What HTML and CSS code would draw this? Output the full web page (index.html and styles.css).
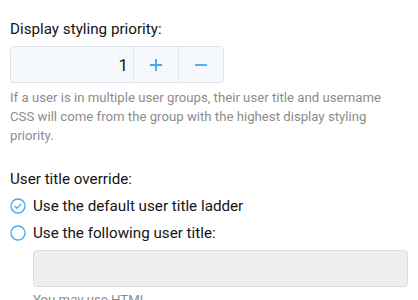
FILE: index.html
```html
<!DOCTYPE html>
<html>
<head>
<meta charset="utf-8">
<link rel="stylesheet" href="styles.css">
</head>
<body>
<div class="form">
  <div class="row">
    <div class="label">Display styling priority:</div>
    <div class="spinbox">
      <div class="spin-value">1</div>
      <div class="spin-btn">
        <svg width="14" height="14" viewBox="0 0 14 14"><path d="M7 1v12M1 7h12" stroke="#47a7eb" stroke-width="1.8"/></svg>
      </div>
      <div class="spin-btn">
        <svg width="14" height="14" viewBox="0 0 14 14"><path d="M1 7h12" stroke="#47a7eb" stroke-width="1.8"/></svg>
      </div>
    </div>
    <div class="explain">If a user is in multiple user groups, their user title and username CSS will come from the group with the highest display styling priority.</div>
  </div>
  <div class="row row2">
    <div class="label label-tight">User title override:</div>
    <div class="choice">
      <svg class="radio" width="16" height="16" viewBox="0 0 16 16"><circle cx="8" cy="8" r="7" fill="none" stroke="#47a7eb" stroke-width="1.3"/><path d="M4.8 8.2l2.2 2.1 4.2-4.4" fill="none" stroke="#47a7eb" stroke-width="1.3"/></svg>
      <span>Use the default user title ladder</span>
    </div>
    <div class="choice">
      <svg class="radio" width="16" height="16" viewBox="0 0 16 16"><circle cx="8" cy="8" r="7" fill="none" stroke="#47a7eb" stroke-width="1.3"/></svg>
      <span>Use the following user title:</span>
    </div>
    <div class="dep">
      <div class="textbox"></div>
      <div class="explain explain-dep">You may use HTML</div>
    </div>
  </div>
</div>
</body>
</html>
```
FILE: styles.css
```css
html, body { margin: 0; padding: 0; background: #fff; }
body { font-family: Roboto, "Noto Sans", sans-serif; color: #141414; }
.form { padding: 18px 10px 0 10px; }
.label { font-size: 15.2px; line-height: 22px; margin-bottom: 6px; }
.label-tight { margin-bottom: 2.5px; }
.spinbox { display: flex; width: 212px; height: 35px; border: 1px solid #dfe4ea; border-radius: 4px; background: #f5f9fd; }
.spin-value { flex: 1; display: flex; align-items: center; justify-content: flex-end; padding-right: 5px; font-size: 17px; color: #141414; }
.spin-btn { width: 44px; border-left: 1px solid #e3e8ee; display: flex; align-items: center; justify-content: center; }
.explain { font-size: 13.2px; line-height: 19px; color: #8c8c8c; margin-top: 5px; }
.row2 { margin-top: 23px; }
.choice { display: flex; align-items: center; gap: 7px; font-size: 15.2px; line-height: 27px; }
.radio { flex: none; }
.dep { padding-left: 23px; margin-top: 3.5px; }
.textbox { height: 35px; border: 1px solid #dcdcdc; border-radius: 4px; background: #eeeeee; }
.explain-dep { margin-top: 3px; }
```
